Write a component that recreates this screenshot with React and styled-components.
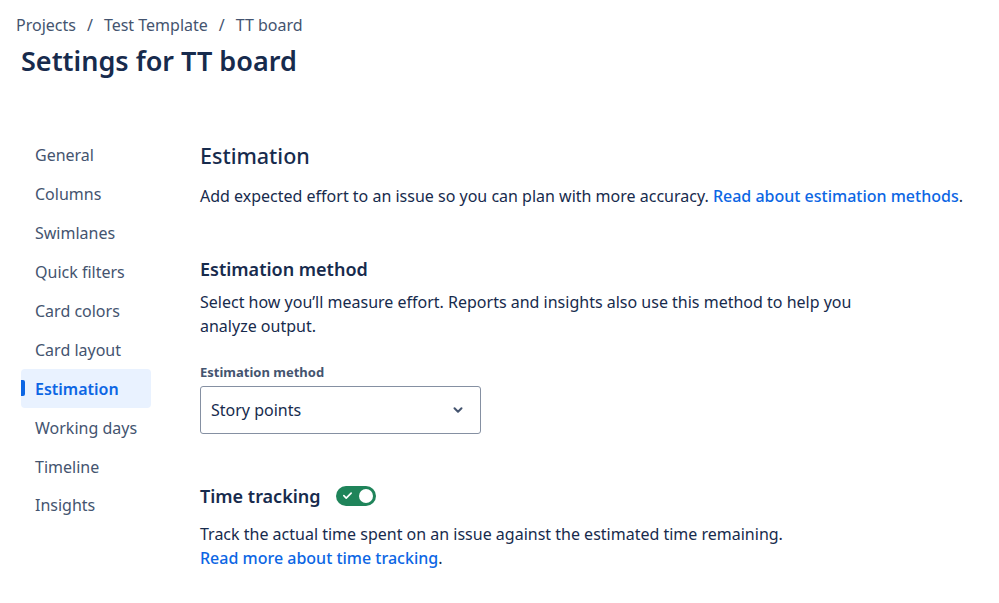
import React from 'react';
import styled, { createGlobalStyle } from 'styled-components';

const GlobalStyle = createGlobalStyle`
  body {
    margin: 0;
    background: #fff;
    font-family: "Noto Sans", "Open Sans", sans-serif;
    color: #172B4D;
  }
`;

const Page = styled.div`
  width: 999px;
  height: 603px;
  overflow: hidden;
  padding: 13px 0 0 16px;
  box-sizing: border-box;
`;

const Breadcrumbs = styled.nav`
  display: flex;
  align-items: center;
  gap: 11px;
  font-size: 16px;
  color: #44546F;
  line-height: 24px;
`;

const Sep = styled.span`
  color: #44546F;
`;

const Title = styled.h1`
  margin: 6px 0 0 5px;
  font-size: 27px;
  font-weight: 600;
  line-height: 36px;
  color: #172B4D;
`;

const Body = styled.div`
  display: flex;
  margin-top: 57px;
`;

const Sidebar = styled.ul`
  list-style: none;
  margin: 0 0 0 5px;
  padding: 0;
  width: 130px;
  display: flex;
  flex-direction: column;
`;

const NavItem = styled.li`
  position: relative;
  height: 38.9px;
  display: flex;
  align-items: center;
  padding-left: 14px;
  border-radius: 4px;
  font-size: 16px;
  color: ${p => (p.$active ? '#0C66E4' : '#44546F')};
  font-weight: ${p => (p.$active ? 600 : 400)};
  background: ${p => (p.$active ? '#E9F2FF' : 'transparent')};

  &::before {
    content: '';
    display: ${p => (p.$active ? 'block' : 'none')};
    position: absolute;
    left: 0;
    top: 11px;
    width: 4px;
    height: 16px;
    border-radius: 0 2px 2px 0;
    background: #0C66E4;
  }
`;

const Content = styled.main`
  margin-left: 49px;
  padding-top: 6px;
  flex: 1;
`;

const H2 = styled.h2`
  margin: 0;
  font-size: 21.5px;
  font-weight: 500;
  line-height: 28px;
`;

const H3 = styled.h3`
  margin: 0;
  font-size: 18px;
  font-weight: 600;
  line-height: 24px;
  display: flex;
  align-items: center;
  gap: 15px;
`;

const Para = styled.p`
  margin: ${p => p.$mt || 0}px 0 0;
  font-size: 16px;
  line-height: 24.5px;
  max-width: ${p => p.$max || 800}px;
  color: #172B4D;
`;

const Link = styled.a`
  color: #0C66E4;
  font-weight: 500;
  text-decoration: none;
`;

const Section = styled.section`
  margin-top: ${p => p.$mt}px;
`;

const Label = styled.div`
  margin-top: 25px;
  font-size: 13px;
  font-weight: 700;
  color: #44546F;
  line-height: 16px;
`;

const Select = styled.div`
  margin-top: 6px;
  width: 281px;
  height: 48px;
  box-sizing: border-box;
  border: 1px solid #8590A2;
  border-radius: 3px;
  display: flex;
  align-items: center;
  justify-content: space-between;
  padding: 0 16px 0 10px;
  font-size: 16px;
  color: #172B4D;
`;

const Toggle = styled.span`
  position: relative;
  display: inline-flex;
  align-items: center;
  width: 40px;
  height: 20px;
  border-radius: 10px;
  background: #1F845A;
  padding-left: 6px;
  box-sizing: border-box;

  &::after {
    content: '';
    position: absolute;
    right: 3px;
    top: 3px;
    width: 14px;
    height: 14px;
    border-radius: 50%;
    background: #fff;
  }
`;

const navItems = [
  'General',
  'Columns',
  'Swimlanes',
  'Quick filters',
  'Card colors',
  'Card layout',
  'Estimation',
  'Working days',
  'Timeline',
  'Insights',
];

export default function App() {
  return (
    <Page>
      <GlobalStyle />
      <Breadcrumbs>
        <span>Projects</span>
        <Sep>/</Sep>
        <span>Test Template</span>
        <Sep>/</Sep>
        <span>TT board</span>
      </Breadcrumbs>
      <Title>Settings for TT board</Title>
      <Body>
        <Sidebar>
          {navItems.map(item => (
            <NavItem key={item} $active={item === 'Estimation'}>{item}</NavItem>
          ))}
        </Sidebar>
        <Content>
          <H2>Estimation</H2>
          <Para $mt={14}>
            Add expected effort to an issue so you can plan with more accuracy.{' '}
            <Link href="#">Read about estimation methods</Link>.
          </Para>
          <Section $mt={48}>
            <H3>Estimation method</H3>
            <Para $mt={9} $max={660}>
              Select how you’ll measure effort. Reports and insights also use this method to help you
              analyze output.
            </Para>
            <Label>Estimation method</Label>
            <Select>
              <span>Story points</span>
              <svg width="12" height="12" viewBox="0 0 24 24">
                <path d="M5 8.5l7 7 7-7" fill="none" stroke="#44546F" strokeWidth="4" strokeLinecap="round" strokeLinejoin="round" />
              </svg>
            </Select>
          </Section>
          <Section $mt={50}>
            <H3>
              Time tracking
              <Toggle>
                <svg width="11" height="11" viewBox="0 0 12 12">
                  <path d="M2 6.2l2.6 2.6L10 3.4" fill="none" stroke="#fff" strokeWidth="1.8" strokeLinecap="round" strokeLinejoin="round" />
                </svg>
              </Toggle>
            </H3>
            <Para $mt={14}>
              Track the actual time spent on an issue against the estimated time remaining.
              <br />
              <Link href="#">Read more about time tracking</Link>.
            </Para>
          </Section>
        </Content>
      </Body>
    </Page>
  );
}
